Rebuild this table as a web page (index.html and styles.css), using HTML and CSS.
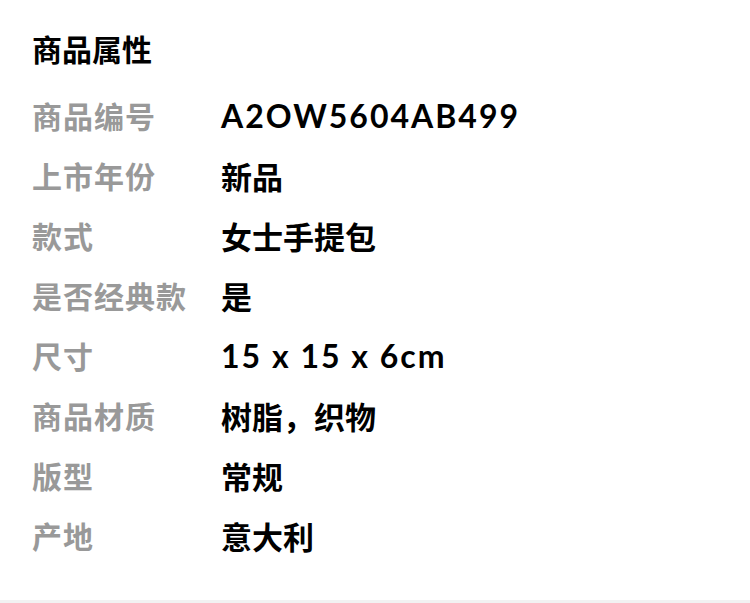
FILE: index.html
```html
<!DOCTYPE html>
<html lang="zh-CN">
<head>
    <meta charset="UTF-8">
    <meta name="viewport" content="width=device-width, initial-scale=1.0">
    <title>商品属性</title>
    <link rel="stylesheet" href="styles.css">
</head>
<body>
    <div class="attrs">
        <h2 class="attrs-title">商品属性</h2>
        <ul class="attrs-list">
            <li><span class="label">商品编号</span><span class="value latin">A2OW5604AB499</span></li>
            <li><span class="label">上市年份</span><span class="value">新品</span></li>
            <li><span class="label">款式</span><span class="value">女士手提包</span></li>
            <li><span class="label">是否经典款</span><span class="value">是</span></li>
            <li><span class="label">尺寸</span><span class="value latin">15 x 15 x 6cm</span></li>
            <li><span class="label">商品材质</span><span class="value">树脂，织物</span></li>
            <li><span class="label">版型</span><span class="value">常规</span></li>
            <li><span class="label">产地</span><span class="value">意大利</span></li>
        </ul>
    </div>
    <div class="divider"></div>
</body>
</html>
```

FILE: styles.css
```css
*{
    box-sizing: border-box;
}
body{
    margin: 0;
    background: #fff;
    font-family: "Noto Sans CJK SC", "Noto Sans", sans-serif;
}
.attrs{
    padding: 18px 32px 35px;
}
.attrs-title{
    margin: 0;
    font-size: 30px;
    line-height: 60px;
    font-weight: 700;
    color: #000;
}
.attrs-list{
    list-style: none;
    margin: 7px 0 0;
    padding: 0;
}
.attrs-list li{
    display: flex;
    align-items: center;
    height: 60px;
    font-size: 30px;
    font-weight: 700;
}
.label{
    width: 189px;
    flex-shrink: 0;
    color: #999;
    letter-spacing: 1px;
}
.value{
    color: #000;
    font-size: 31px;
}
.latin{
    font-family: "Lato", "Noto Sans CJK SC", sans-serif;
    font-size: 32px;
    font-weight: 700;
    letter-spacing: 2px;
}
.divider{
    height: 3px;
    background: #f2f2f2;
}
```
